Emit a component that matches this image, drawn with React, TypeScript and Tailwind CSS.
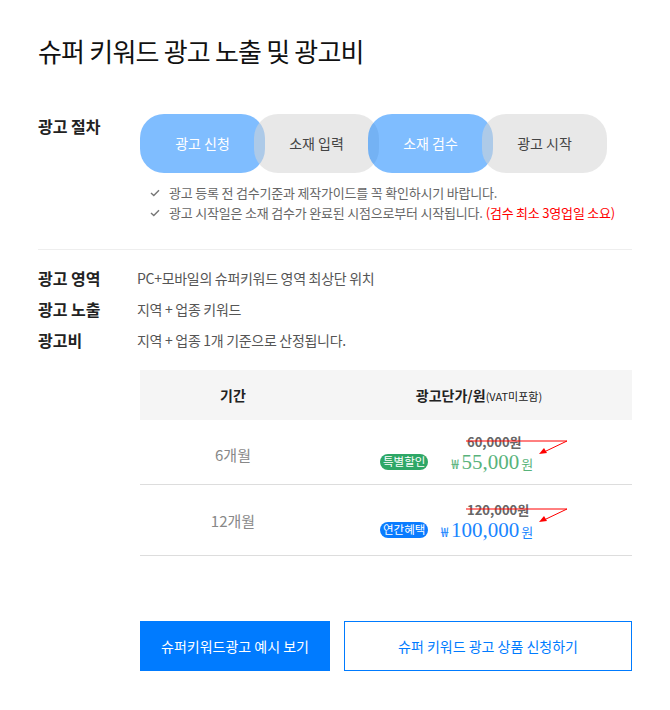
import React from "react";

const KR = { fontFamily: '"Noto Sans CJK KR", "Noto Sans", sans-serif' };

function Check() {
  return (
    <svg width="10" height="8" viewBox="0 0 10 8" className="mr-[9px] shrink-0">
      <path d="M1 4 L3.8 6.6 L9 1.2" fill="none" stroke="#777" strokeWidth="1.4" />
    </svg>
  );
}

function Arrow() {
  return (
    <svg width="104" height="16" viewBox="0 0 104 16" className="absolute left-[86px] top-[4px] overflow-visible">
      <line x1="0" y1="3" x2="101" y2="3" stroke="#ff0000" strokeWidth="1" />
      <line x1="101" y1="3" x2="78" y2="14" stroke="#ff0000" strokeWidth="1" />
      <polygon points="73,16 78,10 81,15" fill="#ff0000" />
    </svg>
  );
}

function PriceCell({
  badge,
  badgeColor,
  orig,
  price,
  priceColor,
}: {
  badge: string;
  badgeColor: string;
  orig: string;
  price: string;
  priceColor: string;
}) {
  return (
    <div className="relative w-[198px] h-[40px]">
      <div className="absolute left-[87px] top-[1px] text-[13px] font-bold text-[#666] leading-none">{orig}</div>
      <Arrow />
      <div className="absolute left-0 right-0 bottom-0 flex items-end">
        <span
          className={`${badgeColor} text-white text-[11.5px] leading-none rounded-full px-[3px] mb-[4px] h-[16px] flex items-center`}
        >
          {badge}
        </span>
        <div className={`w-[105px] text-right whitespace-nowrap ${priceColor}`}>
          <span className="text-[13px] mr-[3px]">₩</span>
          <span className="text-[21px] leading-none" style={{ fontFamily: '"Liberation Serif", serif' }}>
            {price}
          </span>
          <span className="text-[13px] ml-[2px]">원</span>
        </div>
      </div>
    </div>
  );
}

export default function App() {
  const steps = [
    { t: "광고 신청", blue: true },
    { t: "소재 입력", blue: false },
    { t: "소재 검수", blue: true },
    { t: "광고 시작", blue: false },
  ];
  return (
    <div className="w-[670px] h-[710px] bg-white px-[38px] pt-[33px]" style={KR}>
      <h1 className="text-[26px] tracking-[-0.8px] text-[#111] leading-[36px] font-normal">
        슈퍼 키워드 광고 노출 및 광고비
      </h1>

      <div className="mt-[45px] flex">
        <div className="w-[102px] pt-[2px] text-[16px] font-bold text-[#222] leading-[20px]">광고 절차</div>
        <div className="flex">
          {steps.map((s, i) => (
            <div
              key={i}
              className={`w-[125px] h-[59px] rounded-[24px] flex items-center justify-center text-[14px] ${
                i > 0 ? "-ml-[11px]" : ""
              } ${s.blue ? "bg-[rgba(0,123,255,0.5)] text-white" : "bg-[rgba(213,213,213,0.54)] text-[#444]"}`}
            >
              {s.t}
            </div>
          ))}
        </div>
      </div>

      <div className="mt-[10px] ml-[112px] text-[13px] tracking-[-0.2px] text-[#666] leading-[20px]">
        <div className="flex items-center">
          <Check />
          광고 등록 전 검수기준과 제작가이드를 꼭 확인하시기 바랍니다.
        </div>
        <div className="flex items-center">
          <Check />
          광고 시작일은 소재 검수가 완료된 시점으로부터 시작됩니다.
          <span className="text-[#ff0000] ml-[3px]">(검수 최소 3영업일 소요)</span>
        </div>
      </div>

      <div className="mt-[26px] h-px bg-[#eeeeee]" />

      <div className="mt-[18px] flex flex-col gap-[11px]">
        {[
          ["광고 영역", "PC+모바일의 슈퍼키워드 영역 최상단 위치"],
          ["광고 노출", "지역 + 업종 키워드"],
          ["광고비", "지역 + 업종 1개 기준으로 산정됩니다."],
        ].map(([l, v]) => (
          <div key={l} className="flex items-center h-[20px]">
            <div className="w-[99px] text-[16px] font-bold text-[#222]">{l}</div>
            <div className="text-[14px] text-[#555] tracking-[-0.3px]">{v}</div>
          </div>
        ))}
      </div>

      <div className="mt-[20px] ml-[102px]">
        <div className="flex h-[50px] bg-[#f5f5f5] items-center text-[14px] font-bold text-[#222]">
          <div className="w-[186px] text-center">기간</div>
          <div className="flex-1 text-center">
            광고단가/원<span className="text-[11px] font-normal">(VAT미포함)</span>
          </div>
        </div>
        <div className="flex h-[65px] items-center border-b border-[#dddddd]">
          <div className="w-[186px] text-center text-[15px] text-[#888] pt-[6px]">6개월</div>
          <div className="flex-1 flex justify-center pt-[4px]">
            <PriceCell
              badge="특별할인"
              badgeColor="bg-[#2ea766]"
              orig="60,000원"
              price="55,000"
              priceColor="text-[#58b37b]"
            />
          </div>
        </div>
        <div className="flex h-[71px] items-center border-b border-[#dddddd]">
          <div className="w-[186px] text-center text-[15px] text-[#888] pt-[2px]">12개월</div>
          <div className="flex-1 flex justify-center pt-[4px]">
            <PriceCell
              badge="연간혜택"
              badgeColor="bg-[#0a7cff]"
              orig="120,000원"
              price="100,000"
              priceColor="text-[#1a86ff]"
            />
          </div>
        </div>
      </div>

      <div className="mt-[65px] ml-[102px] flex gap-[14px]">
        <button className="w-[190px] h-[50px] bg-[#007bff] text-white text-[14px] font-normal">
          슈퍼키워드광고 예시 보기
        </button>
        <button className="flex-1 h-[50px] border border-[#007bff] text-[#007bff] text-[14px] font-normal bg-white">
          슈퍼 키워드 광고 상품 신청하기
        </button>
      </div>
    </div>
  );
}
